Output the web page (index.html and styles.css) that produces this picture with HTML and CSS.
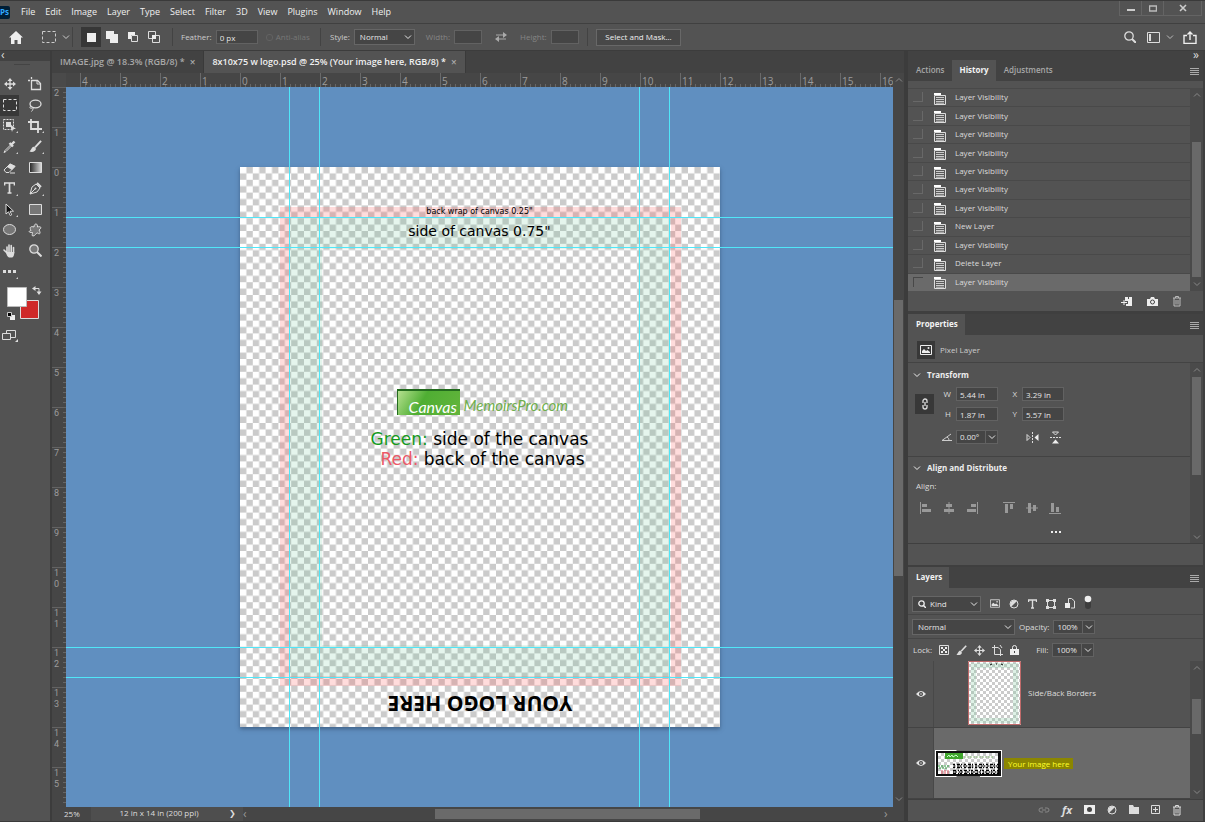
FILE: index.html
```html
<!DOCTYPE html>
<html lang="en">
<head>
<meta charset="utf-8">
<title>8x10x75 w logo.psd</title>
<link rel="stylesheet" href="styles.css">
</head>
<body>
<svg class="defs" aria-hidden="true">
  <defs>
    <symbol id="chev" viewBox="0 0 8 8"><path d="M1 2.500l3 3 3-3" fill="none" stroke="currentColor"/></symbol>
    <symbol id="chev-up" viewBox="0 0 8 8"><path d="M1 5.500l3-3 3 3" fill="none" stroke="currentColor"/></symbol>
    <symbol id="menu" viewBox="0 0 9 8"><path d="M0 1.500h9M0 3.500h9M0 5.500h9M0 7.500h9" stroke="currentColor"/></symbol>
    <symbol id="state" viewBox="0 0 12 14"><path d="M0 1h7v2H0z" fill="#fff"/><path d="M.5 3.500h11v9H.5z" fill="#5a5a5a" stroke="#ddd"/><path d="M2 5.500h8M2 7.500h8M2 9.500h8M2 11.200h8" stroke="#ccc"/></symbol>
    <symbol id="trash" viewBox="0 0 10 12"><path d="M1 3h8M3.500 3V1.500h3V3M2 3v8h6V3M4 5v4.500M6 5v4.500" fill="none" stroke="currentColor"/></symbol>
    <symbol id="eye" viewBox="0 0 10 8"><path d="M0 4Q5-2 10 4Q5 10 0 4z" fill="#e4e4e4"/><circle cx="5" cy="4" r="2" fill="#444"/><circle cx="5" cy="4" r=".8" fill="#e4e4e4"/></symbol>
    <symbol id="move" viewBox="0 0 12 12"><path d="M6 1v10M1 6h10" stroke="currentColor" stroke-width="1.300"/><path d="M6 0l2.500 3h-5zM6 12l2.500-3h-5zM0 6l3-2.500v5zM12 6L9 3.500v5z" fill="currentColor"/></symbol>
    <symbol id="brush" viewBox="0 0 14 14"><path d="M13 1L6.500 8" stroke="currentColor" stroke-width="2"/><path d="M6 7.500c-3-1-3 3-5.500 5 3 1 7 0 7-3z" fill="currentColor"/></symbol>
    <symbol id="half" viewBox="0 0 10 10"><circle cx="5" cy="5" r="4" fill="none" stroke="currentColor"/><path d="M2.200 7.800A4 4 0 0 1 7.800 2.200z" fill="currentColor"/></symbol>
    <symbol id="picture" viewBox="0 0 12 10"><path d="M.5.5h11v9H.5z" fill="none" stroke="currentColor"/><path d="M2 8V6l2-2 2 2 1.500-1L10 7v1z" fill="currentColor"/><circle cx="8.500" cy="3" r="1" fill="currentColor"/></symbol>
    <symbol id="marquee" viewBox="0 0 14 12"><path d="M.5.5h13v11H.5z" fill="none" stroke="currentColor" stroke-dasharray="3 2"/></symbol>
    <pattern id="checker" width="2" height="2" patternUnits="userSpaceOnUse"><path d="M0 0h2v2H0z" fill="#fff"/><path d="M1 0h1v1H1zM0 1h1v1H0z" fill="#cbcbcb"/></pattern>
    <linearGradient id="grad-tool"><stop offset="0" stop-color="#222"/><stop offset="1" stop-color="#ddd"/></linearGradient>
  </defs>
</svg>

<header class="menubar">
  <span class="app">Ps</span>
  <nav class="menus">
    <button>File</button><button>Edit</button><button>Image</button><button>Layer</button><button>Type</button><button>Select</button><button>Filter</button><button>3D</button><button>View</button><button>Plugins</button><button>Window</button><button>Help</button>
  </nav>
  <div class="window-controls">
    <button aria-label="Minimize"><svg width="8" height="8"><path d="M0 6h8" stroke="#ccc" stroke-width="2"/></svg></button>
    <button aria-label="Maximize"><svg width="8" height="7"><path d="M.5 1h7v5h-7z" fill="none" stroke="#bbb" stroke-width="1.500"/></svg></button>
    <button aria-label="Close" class="close"><svg width="8" height="8"><path d="M1 1l6 6M7 1L1 7" stroke="#ccc" stroke-width="1.600"/></svg></button>
  </div>
</header>

<div class="options">
  <button class="icon home" aria-label="Home"><svg width="14" height="13"><path d="M7 0l7 6.500h-2V13H8.500V9h-3v4H2V6.500H0z" fill="#eee"/></svg></button>
  <div class="opt preset"><svg width="14" height="12"><use href="#marquee"/></svg><svg width="8" height="8"><use href="#chev"/></svg></div>
  <div class="opt modes">
    <button class="icon on" aria-label="New selection"><svg width="9" height="9"><path d="M0 0h9v9H0z" fill="#eee"/></svg></button>
    <button class="icon" aria-label="Add to selection"><svg width="12" height="12"><path d="M0 0h8v3h4v9H4V8H0z" fill="#eee"/></svg></button>
    <button class="icon" aria-label="Subtract from selection"><svg width="10" height="10"><path d="M0 0h7v3H3v4H0z" fill="#eee"/><path d="M3.500 3.500h6v6h-6z" fill="none" stroke="#ddd"/></svg></button>
    <button class="icon" aria-label="Intersect with selection"><svg width="12" height="12"><path d="M.5.5h7v7h-7zM4.500 4.500h7v7h-7z" fill="none" stroke="#ddd"/><path d="M4 4h4v4H4z" fill="#eee"/></svg></button>
  </div>
  <div class="opt feather">
    <label for="feather">Feather:</label><input id="feather" class="field" value="0 px">
    <label class="anti"><input type="checkbox" disabled>Anti-alias</label>
  </div>
  <div class="opt style">
    <label for="style">Style:</label>
    <span class="drop"><select id="style"><option>Normal</option></select><svg width="8" height="8"><use href="#chev"/></svg></span>
    <label class="dim w" for="width">Width:</label><input id="width" class="field small" disabled>
    <svg class="swap" width="12" height="10"><path d="M1 3h9M2 7h9" stroke="#aaa"/><path d="M8 0l4 3-4 3zM4 4L0 7l4 3z" fill="#aaa"/></svg>
    <label class="dim" for="height">Height:</label><input id="height" class="field small" disabled>
  </div>
  <div class="opt mask"><button class="mask-button">Select and Mask...</button></div>
  <div class="right-icons">
    <button class="icon" aria-label="Search"><svg width="12" height="12"><circle cx="5" cy="5" r="4.200" fill="none" stroke="#ddd" stroke-width="1.300"/><path d="M8 8l4 4" stroke="#ddd" stroke-width="2"/></svg></button>
    <button class="icon" aria-label="Workspace"><svg width="13" height="11"><path d="M.5.5h12v10H.5z" fill="none" stroke="#ddd"/><path d="M2 2h2v7H2z" fill="#ddd"/></svg></button>
    <svg class="grey" width="8" height="8"><use href="#chev"/></svg>
    <button class="icon" aria-label="Share"><svg width="14" height="13"><path d="M4 4.500H1v8h12v-8h-3M7 9V1M4.500 3.500L7 1l2.500 2.500" fill="none" stroke="#eee" stroke-width="1.400"/></svg></button>
  </div>
</div>

<main class="workspace">
  <aside class="tools">
    <div class="collapse">‹</div>
    <div class="grip"></div>
    <div class="tool-grid">
      <button aria-label="Move"><svg width="12" height="12"><use href="#move"/></svg></button>
      <button aria-label="Artboard"><svg width="14" height="14"><path d="M3.500 0v2M0 3.500h2M3.500 3.500h6l3 3v6h-9z" fill="none" stroke="currentColor" stroke-width="1.300"/><path d="M9 3.500V7h3.500" fill="none" stroke="currentColor"/></svg></button>
      <button aria-label="Marquee" class="on"><svg width="14" height="12"><use href="#marquee"/></svg></button>
      <button aria-label="Lasso"><svg width="14" height="13"><ellipse cx="7.500" cy="5" rx="5.500" ry="3.800" fill="none" stroke="currentColor" stroke-width="1.300"/><path d="M3 7c-2 1-1 3 1 2s1 2-.5 3.500" fill="none" stroke="currentColor"/></svg></button>
      <button aria-label="Object selection" class="more"><svg width="13" height="13"><path d="M.5.5h10v10H.5z" fill="none" stroke="currentColor" stroke-dasharray="2 1"/><path d="M3 3h5v5H3z" fill="currentColor"/><path d="M7 5l6 5H10l-1 3z" fill="currentColor"/></svg></button>
      <button aria-label="Crop" class="more"><svg width="14" height="14"><path d="M3 0v10h11M0 3h10v11" fill="none" stroke="currentColor" stroke-width="1.800"/></svg></button>
      <button aria-label="Eyedropper" class="more"><svg width="13" height="13"><path d="M8 4.500L2 10.500l-1 2 2-1 6-6" fill="none" stroke="currentColor"/><path d="M6.500 3l3.500 3.500M8 5l3.500-3.500" stroke="currentColor" stroke-width="2.400"/></svg></button>
      <button aria-label="Brush" class="more"><svg width="13" height="13"><use href="#brush"/></svg></button>
      <button aria-label="Eraser"><svg width="13" height="12"><path d="M1 8l6-6 5 2.500-6 6H3z" fill="none" stroke="currentColor"/><path d="M4 5l3-3.500L12.500 4 9 8z" fill="currentColor"/><path d="M7 11h5" stroke="currentColor"/></svg></button>
      <button aria-label="Gradient"><svg width="13" height="11"><path d="M.5.5h12v10H.5z" fill="url(#grad-tool)" stroke="currentColor"/></svg></button>
      <button aria-label="Type" class="more"><svg width="11" height="12"><path d="M.5 3.500V1h10v2.500M5.500 1v10M3.500 11h4" fill="none" stroke="currentColor" stroke-width="1.700"/></svg></button>
      <button aria-label="Pen" class="more"><svg width="13" height="13"><path d="M1 12l2-7 4-3 4 4-3 4zM1 12l5-5" fill="none" stroke="currentColor"/><path d="M8 1l4 4" stroke="currentColor" stroke-width="2"/><circle cx="6.500" cy="6.500" r="1" fill="currentColor"/></svg></button>
      <button aria-label="Path selection" class="more"><svg width="9" height="13"><path d="M1 1v10l2.500-2.200 1.700 3.700 1.500-.7L5 8.200h3.500z" fill="#111" stroke="currentColor"/></svg></button>
      <button aria-label="Rectangle"><svg width="13" height="11"><path d="M.5.5h12v10H.5z" fill="#777" stroke="currentColor"/></svg></button>
      <button aria-label="Ellipse"><svg width="13" height="11"><ellipse cx="6.500" cy="5.500" rx="6" ry="5" fill="#777" stroke="currentColor"/></svg></button>
      <button aria-label="Custom shape"><svg width="14" height="14"><path d="M6 4c0-4 4-4 3.500 0 3-1 5 .5 1.500 3 2 3 1 5-1.500 3-2 0-2 3-4.500 3-2 0 0-3-.5-3.500C1 10 0 8 3 7.500 1 4 3 3 6 4z" fill="#777" stroke="currentColor"/></svg></button>
      <button aria-label="Hand"><svg width="13" height="14"><path d="M1 6l3 3M4 9V3M6 8V1M8.200 8V1.500M10.500 9V3.500" fill="none" stroke="currentColor" stroke-width="1.600" stroke-linecap="round"/><path d="M3 8h8.300c0 3-1 5.500-2.300 5.500H6C4.500 13 3 10 3 8z" fill="currentColor"/></svg></button>
      <button aria-label="Zoom"><svg width="13" height="13"><circle cx="5" cy="5" r="4.200" fill="#777" stroke="currentColor" stroke-width="1.300"/><path d="M8 8l4.500 4.500" stroke="currentColor" stroke-width="2"/></svg></button>
      <button aria-label="Edit toolbar" class="more"><svg width="13" height="3"><path d="M0 0h3v3H0zM5 0h3v3H5zM10 0h3v3h-3z" fill="currentColor"/></svg></button>
    </div>
    <svg class="swatches" width="42" height="66" aria-label="Colors">
      <path d="M20.500 16.500h18v18h-18z" fill="#cf2a2a" stroke="#ddd"/>
      <path d="M7.500 3.500h19v19h-19z" fill="#fff" stroke="#bbb"/>
      <path d="M35 4.500h4v5" fill="none" stroke="#ddd"/><path d="M32 4.500L35.500 2v5zM39 11l-2.500-3.500h5z" fill="#ddd"/>
      <path d="M10 31h5v5h-5z" fill="#eee"/><path d="M7.500 28.500h4v4h-4z" fill="#000" stroke="#ccc"/>
      <path d="M6.500 46.500h9v7h-9z" fill="#535353" stroke="#ddd"/><path d="M2.500 49.500h8v6h-8z" fill="#535353" stroke="#ddd"/><path d="M18 58v-3l-3 3z" fill="#ddd"/>
    </svg>
  </aside>

  <section class="document">
    <div class="tabs">
      <div class="tab">IMAGE.jpg @ 18.3% (RGB/8) * <button aria-label="Close tab">×</button></div>
      <div class="tab active">8x10x75 w logo.psd @ 25% (Your image here, RGB/8) * <button aria-label="Close tab">×</button></div>
    </div>
    <div class="corner"></div>
    <div class="ruler-x"><span>4</span><span>3</span><span>2</span><span>1</span><span>0</span><span>1</span><span>2</span><span>3</span><span>4</span><span>5</span><span>6</span><span>7</span><span>8</span><span>9</span><span>10</span><span>11</span><span>12</span><span>13</span><span>14</span><span>15</span><span>16</span></div>
    <div class="arrow"><svg width="8" height="8"><use href="#chev-up"/></svg></div>
    <div class="ruler-y"><span>2</span><span>1</span><span>0</span><span>1</span><span>2</span><span>3</span><span>4</span><span>5</span><span>6</span><span>7</span><span>8</span><span>9</span><span>1<br>0</span><span>1<br>1</span><span>1<br>2</span><span>1<br>3</span><span>1<br>4</span><span>1<br>5</span></div>
    <div class="viewport">
      <div class="artboard">
        <svg class="transparency" viewBox="0 0 150 175" aria-hidden="true"><path d="M0 0h75v88H0z" fill="url(#checker)" transform="scale(2)"/></svg>
        <div class="wrap-band"></div>
        <div class="side-band"></div>
        <p class="layer-text note-back">back wrap of canvas 0.25"</p>
        <p class="layer-text note-side">side of canvas 0.75"</p>
        <div class="logo"><span class="logo-box">Canvas</span><span class="logo-rest">MemoirsPro.com</span></div>
        <p class="layer-text legend green"><b>Green:</b> side of the canvas</p>
        <p class="layer-text legend red"><b>Red:</b> back of the canvas</p>
        <p class="layer-text your-logo">YOUR LOGO HERE</p>
      </div>
      <i class="guide v g1"></i><i class="guide v g2"></i><i class="guide v g3"></i><i class="guide v g4"></i>
      <i class="guide h g5"></i><i class="guide h g6"></i><i class="guide h g7"></i><i class="guide h g8"></i>
    </div>
    <div class="scroll-y"><i></i><svg width="8" height="8"><use href="#chev"/></svg></div>
    <footer class="status">
      <span class="zoom">25%</span>
      <span class="size">12 in x 14 in (200 ppi)</span>
      <span class="next">❯</span>
      <span class="scroll-x"><span>‹</span><i></i><span>›</span></span>
    </footer>
  </section>

  <aside class="panels">
    <div class="expand">»</div>
    <section class="history">
      <div class="panel-tabs"><button>Actions</button><button class="active">History</button><button>Adjustments</button><svg class="panel-menu" width="9" height="8"><use href="#menu"/></svg></div>
      <div class="history-body">
        <ul class="states">
          <li><input type="checkbox" aria-label="Source"><svg width="12" height="14"><use href="#state"/></svg>Layer Visibility</li>
          <li><input type="checkbox" aria-label="Source"><svg width="12" height="14"><use href="#state"/></svg>Layer Visibility</li>
          <li><input type="checkbox" aria-label="Source"><svg width="12" height="14"><use href="#state"/></svg>Layer Visibility</li>
          <li><input type="checkbox" aria-label="Source"><svg width="12" height="14"><use href="#state"/></svg>Layer Visibility</li>
          <li><input type="checkbox" aria-label="Source"><svg width="12" height="14"><use href="#state"/></svg>Layer Visibility</li>
          <li><input type="checkbox" aria-label="Source"><svg width="12" height="14"><use href="#state"/></svg>Layer Visibility</li>
          <li><input type="checkbox" aria-label="Source"><svg width="12" height="14"><use href="#state"/></svg>Layer Visibility</li>
          <li><input type="checkbox" aria-label="Source"><svg width="12" height="14"><use href="#state"/></svg>New Layer</li>
          <li><input type="checkbox" aria-label="Source"><svg width="12" height="14"><use href="#state"/></svg>Layer Visibility</li>
          <li><input type="checkbox" aria-label="Source"><svg width="12" height="14"><use href="#state"/></svg>Delete Layer</li>
          <li class="current"><input type="checkbox" aria-label="Source"><svg width="12" height="14"><use href="#state"/></svg>Layer Visibility</li>
        </ul>
        <div class="bar bar-history"><svg width="8" height="8"><use href="#chev-up"/></svg><i></i><svg width="8" height="8"><use href="#chev"/></svg></div>
      </div>
      <div class="history-actions">
        <button class="icon" aria-label="New document from state"><svg width="12" height="11"><path d="M4 1h3v2h1V1h3v9H5V8h2V5H4z" fill="#eee"/><path d="M0 6.500h6M3 4v5" stroke="#eee"/></svg></button>
        <button class="icon" aria-label="Snapshot"><svg width="11" height="9"><path d="M0 2h3l1-2h3l1 2h3v7H0z" fill="#eee"/><circle cx="5.500" cy="5" r="2" fill="none" stroke="#444"/></svg></button>
        <button class="icon grey" aria-label="Delete state"><svg width="10" height="12"><use href="#trash"/></svg></button>
      </div>
    </section>

    <section class="properties">
      <div class="panel-tabs"><button class="active">Properties</button><svg class="panel-menu" width="9" height="8"><use href="#menu"/></svg></div>
      <div class="kind-row"><span class="chip"><svg width="12" height="10"><use href="#picture"/></svg></span>Pixel Layer</div>
      <div class="props-body">
        <div class="props-main">
          <div class="transform">
            <h2><svg width="8" height="8"><use href="#chev"/></svg>Transform</h2>
            <div class="transform-grid">
              <button class="chip link" aria-label="Link width and height"><svg width="8" height="12"><path d="M2 5V3a2 2 0 0 1 4 0v2M2 7v2a2 2 0 0 0 4 0V7M4 4v4" fill="none" stroke="#ddd" stroke-width="1.300"/></svg></button>
              <label for="tw">W</label><input class="field" id="tw" value="5.44 in"><label for="tx">X</label><input class="field" id="tx" value="3.29 in">
              <label for="th">H</label><input class="field" id="th" value="1.87 in"><label for="ty">Y</label><input class="field" id="ty" value="5.57 in">
            </div>
            <div class="angle-row">
              <svg width="11" height="8"><path d="M10 1L1 7.500h10M6 4q2 1 2 3" fill="none" stroke="#ccc"/></svg>
              <span class="combo"><input aria-label="Angle" value="0.00°"><button aria-label="Angle presets"><svg width="8" height="8"><use href="#chev"/></svg></button></span>
              <button class="icon flip" aria-label="Flip horizontal"><svg width="13" height="11"><path d="M1 2.500v6l3-3z" fill="none" stroke="#ddd"/><path d="M12.500 2v7L8.500 5.500z" fill="#eee"/><path d="M6.500 0v11" stroke="#ddd" stroke-dasharray="2 1"/></svg></button>
              <button class="icon" aria-label="Flip vertical"><svg width="11" height="13"><path d="M2.500 1h6l-3 3z" fill="none" stroke="#ddd"/><path d="M2 12.500h7L5.500 8.500z" fill="#eee"/><path d="M0 6.500h11" stroke="#ddd" stroke-dasharray="2 1"/></svg></button>
            </div>
          </div>
          <div class="align">
            <h2><svg width="8" height="8"><use href="#chev"/></svg>Align and Distribute</h2>
            <p>Align:</p>
            <div class="align-row">
              <button class="icon" aria-label="Align left"><svg width="12" height="12"><path d="M.5 0v12" stroke="#999"/><path d="M2 2h5v3H2zM2 7h9v3H2z" fill="#999"/></svg></button>
              <button class="icon" aria-label="Align center"><svg width="12" height="12"><path d="M6 0v12" stroke="#999"/><path d="M3 2h6v3H3zM1 7h10v3H1z" fill="#999"/></svg></button>
              <button class="icon" aria-label="Align right"><svg width="12" height="12"><path d="M11.500 0v12" stroke="#999"/><path d="M5 2h5v3H5zM1 7h9v3H1z" fill="#999"/></svg></button>
              <button class="icon vertical" aria-label="Align top"><svg width="12" height="12"><path d="M0 .5h12" stroke="#999"/><path d="M2 2h3v9H2zM7 2h3v5H7z" fill="#999"/></svg></button>
              <button class="icon" aria-label="Align middle"><svg width="12" height="12"><path d="M0 6h12" stroke="#999"/><path d="M2 1h3v10H2zM7 3h3v6H7z" fill="#999"/></svg></button>
              <button class="icon" aria-label="Align bottom"><svg width="12" height="12"><path d="M0 11.500h12" stroke="#999"/><path d="M2 1h3v9H2zM7 5h3v5H7z" fill="#999"/></svg></button>
            </div>
            <button class="icon dots" aria-label="More options"><svg width="11" height="3"><path d="M0 0h2v2H0zM4 0h2v2H4zM8 0h2v2H8z" fill="#eee"/></svg></button>
          </div>
        </div>
        <div class="bar bar-props"><svg width="8" height="8"><use href="#chev-up"/></svg><i></i><svg width="8" height="8"><use href="#chev"/></svg></div>
      </div>
    </section>

    <section class="layers">
      <div class="panel-tabs"><button class="active">Layers</button><svg class="panel-menu" width="9" height="8"><use href="#menu"/></svg></div>
      <div class="filter-row">
        <span class="drop kind"><select aria-label="Filter kind"><option>Kind</option></select><svg class="lens" width="8" height="8"><circle cx="3.500" cy="3.500" r="2.700" fill="none" stroke="#eee" stroke-width="1.300"/><path d="M5.500 5.500L8 8" stroke="#eee" stroke-width="1.500"/></svg><svg width="8" height="8"><use href="#chev"/></svg></span>
        <svg width="10" height="9"><use href="#picture"/></svg>
        <svg width="10" height="10"><use href="#half"/></svg>
        <svg width="9" height="10"><path d="M.5 3V1h8v2M4.500 1v8M3 9h3" fill="none" stroke="#ddd" stroke-width="1.400"/></svg>
        <svg width="10" height="10"><path d="M1.500 1.500h7v7h-7z" fill="none" stroke="#ddd"/><path d="M0 0h3v3H0zM7 0h3v3H7zM0 7h3v3H0zM7 7h3v3H7z" fill="#ddd"/></svg>
        <svg width="10" height="11"><path d="M3.500 5V.5h3L9.500 3v7H6" fill="none" stroke="#ddd"/><path d="M0 5h5v5H0z" fill="#eee"/></svg>
        <svg width="8" height="18"><rect x="1" y="1" width="6" height="13" rx="3" fill="#3c3c3c"/><circle cx="4" cy="4" r="3.300" fill="#eee"/></svg>
      </div>
      <div class="blend-row">
        <span class="drop blend"><select aria-label="Blend mode"><option>Normal</option></select><svg width="8" height="8"><use href="#chev"/></svg></span>
        <label for="opacity">Opacity:</label>
        <span class="combo"><input id="opacity" value="100%"><button aria-label="Opacity slider"><svg width="8" height="8"><use href="#chev"/></svg></button></span>
      </div>
      <div class="lock-row">
        <span>Lock:</span>
        <svg width="10" height="10"><path d="M.5.5h9v9h-9z" fill="none" stroke="#ddd"/><path d="M2 2h2v2H2zM6 2h2v2H6zM4 4h2v2H4zM2 6h2v2H2zM6 6h2v2H6z" fill="#eee"/></svg>
        <svg width="11" height="11" viewBox="0 0 14 14"><use href="#brush" width="14" height="14"/></svg>
        <svg width="11" height="11"><use href="#move"/></svg>
        <svg width="11" height="11"><path d="M2.500 0v9.500H11M0 2.500h6l2.500 2V11M8 0l2 3" fill="none" stroke="#ddd"/></svg>
        <svg width="9" height="10"><path d="M0 4h9v6H0z" fill="#eee"/><path d="M2.500 4V2.500a2 2 0 0 1 4 0V4" fill="none" stroke="#eee"/><path d="M4 6h1v2H4z" fill="#444"/></svg>
        <label for="fill">Fill:</label>
        <span class="combo"><input id="fill" value="100%"><button aria-label="Fill slider"><svg width="8" height="8"><use href="#chev"/></svg></button></span>
      </div>
      <div class="layer-body">
        <ul class="layer-list">
          <li class="borders">
            <button class="icon eye" aria-label="Toggle visibility"><svg width="10" height="8"><use href="#eye"/></svg></button>
            <div class="layer-main"><svg class="thumb" width="53" height="64"><path d="M0 0h18v22H0z" fill="url(#checker)" transform="scale(3)"/><path d="M5.500 4.500h42v55h-42z" fill="none" stroke="#7cc79c" stroke-opacity=".25" stroke-width="5"/><path d="M.5.5h52v63H.5z" fill="none" stroke="#c06a6a"/><path d="M22 4l2-1M28 3h1M33 3l2 1" stroke="#000"/></svg>Side/Back Borders</div>
          </li>
          <li class="on">
            <button class="icon eye" aria-label="Toggle visibility"><svg width="10" height="8"><use href="#eye"/></svg></button>
            <div class="layer-main"><svg class="thumb" width="67" height="27"><path d="M1 1h65v25H1z" fill="#111"/><path d="M1 1h20v7H1z" fill="url(#checker)" transform="scale(3)"/><path d="M10 3h18v6H10z" fill="#3fa52c"/><path d="M12 7l2-2 1 2 2-2 1 2 3-2 2 2" fill="none" stroke="#cfc"/><path d="M29 7h29" stroke="#8fbf7d" stroke-dasharray="2 1"/><path d="M3 16h11M4 18h9" stroke="#2b9c3d" stroke-dasharray="2 1"/><path d="M18 14.500h46M18 17.500h46" stroke="#000" stroke-width="1.300" stroke-dasharray="2 2 3 1 1 2"/><path d="M19 16h45" stroke="#000" stroke-dasharray="1 2 2 1"/><path d="M6 21h8M6 23h9" stroke="#dd5560" stroke-dasharray="2 1"/><path d="M18 20.500h46M18 23.500h46" stroke="#000" stroke-width="1.300" stroke-dasharray="3 2 1 1 2 2"/><path d="M18 22h46" stroke="#000" stroke-dasharray="1 1 2 2"/><path d="M.5.5h21M45 .5h21M.5 26.500h21M45 26.500h21M.5 0v27M66.500 0v27" stroke="#fff"/></svg><mark>Your image here</mark></div>
          </li>
        </ul>
        <div class="bar bar-layers"><svg width="8" height="8"><use href="#chev-up"/></svg><i></i><svg width="8" height="8"><use href="#chev"/></svg></div>
      </div>
      <div class="layer-actions">
        <button class="icon" aria-label="Link layers"><svg width="12" height="6"><path d="M5 1H3a2 2 0 0 0 0 4h2M7 1h2a2 2 0 0 1 0 4H7M4 3h4" fill="none" stroke="#888"/></svg></button>
        <button class="icon fx" aria-label="Layer style">fx</button>
        <button class="icon" aria-label="Add mask"><svg width="11" height="9"><path d="M0 0h11v9H0z" fill="#eee"/><circle cx="5.500" cy="4.500" r="2.500" fill="#444"/></svg></button>
        <button class="icon" aria-label="Adjustment layer"><svg width="10" height="10"><use href="#half"/></svg></button>
        <button class="icon" aria-label="New group"><svg width="10" height="9"><path d="M0 0h4l1 2h5v7H0z" fill="#ddd"/></svg></button>
        <button class="icon" aria-label="New layer"><svg width="9" height="9"><path d="M.5.5h8v8h-8zM4.500 2v5M2 4.500h5" fill="none" stroke="#ddd"/></svg></button>
        <button class="icon" aria-label="Delete layer"><svg width="10" height="12"><use href="#trash"/></svg></button>
      </div>
    </section>
  </aside>
</main>
</body>
</html>
```

FILE: styles.css
```css
* { box-sizing: border-box; }
body {
  margin: 0; height: 100vh; overflow: hidden;
  display: flex; flex-direction: column;
  background: #535353; color: #dcdcdc;
  font: 8px/12px "Open Sans", "Noto Sans", sans-serif;
  border-bottom: 1px solid #3a3a3a;
}
button, input, select { font: inherit; color: inherit; margin: 0; padding: 0; border: 0; background: none; border-radius: 0; outline: 0; }
svg { display: block; flex: none; }
ul { list-style: none; margin: 0; padding: 0; }
p, h2 { margin: 0; }
.defs { position: absolute; width: 0; height: 0; }
.icon { display: flex; align-items: center; justify-content: center; flex: none; }
.grey { color: #bbb; }

.menubar { flex: none; height: 24px; display: flex; border-top: 1px solid #3a3a3a; border-bottom: 1px solid #404040; font-size: 9px; }
.app { align-self: center; width: 10px; height: 13px; overflow: hidden; background: #001e36; color: #31a8ff; font-size: 8px; font-weight: 700; border-radius: 0 2px 2px 0; }
.menus { flex: 1; display: flex; gap: 10px; padding-left: 11px; color: #f0f0f0; }
.window-controls { display: flex; height: 15px; margin-right: 3px; border: 1px solid #646464; border-top: 0; }
.window-controls button { width: 22px; display: grid; place-items: center; border-right: 1px solid #646464; }
.window-controls .close { width: 37px; border: 0; }

.options { flex: none; height: 27px; display: grid; grid-template-columns: 31px 41px 100px 148px 267px 1fr auto; align-items: center; border-bottom: 1px solid #3c3c3c; color: #ccc; }
.options > .opt { height: 18px; display: flex; align-items: center; }
.options > .opt + .opt { border-left: 1px solid #434343; }
.options > .opt.modes { height: 20px; padding-left: 8px; gap: 1px; }
.preset { padding-left: 11px; gap: 6px; }
.modes .icon { width: 20px; height: 20px; }
.modes .on { background: #373737; }
.field { width: 42px; height: 14px; padding: 0 3px; background: #454545; border: 1px solid #626262; color: #e6e6e6; }
.small { width: 28px; }
.feather { padding-left: 8px; gap: 4px; }
.anti { display: flex; align-items: center; gap: 3px; margin-left: 4px; color: #777; }
.anti input { appearance: none; width: 7px; height: 7px; border: 1px solid #626262; border-radius: 3px; }
.style { padding-left: 9px; gap: 4px; }
.dim { color: #858585; }
.w { margin-left: 7px; }
.swap { margin: 0 9px 0 9px; }
.drop { display: grid; width: 61px; height: 16px; background: #454545; border: 1px solid #666; color: #e6e6e6; align-items: center; }
.drop > * { grid-area: 1 / 1; }
.drop > svg { justify-self: end; margin-right: 2px; pointer-events: none; }
.drop select { appearance: none; width: 100%; padding-left: 5px; }
.mask { padding-left: 8px; }
.mask-button { width: 85px; height: 17px; background: #484848; border: 1px solid #686868; color: #eee; }
.right-icons { display: flex; align-items: center; gap: 9px; padding-right: 8px; }
.right-icons .icon:first-child { margin-right: 2px; }
.right-icons .grey { margin-left: -3px; }

.workspace { flex: 1; min-height: 0; display: grid; grid-template-columns: 50px minmax(0, 1fr) 297px; }
.tools { display: flex; flex-direction: column; background: #535353; }
.collapse { height: 10px; line-height: 8px; padding-left: 1px; background: #424242; font-size: 12px; }
.grip { width: 16px; height: 1px; margin: 3px 0 9px 14px; background: #444; }
.tool-grid { flex: none; height: 208px; display: grid; grid-template: repeat(10, 1fr) / 19px 32px; }
.tool-grid button { position: relative; display: grid; place-items: center; color: #ddd; }
.tool-grid .on { background: #383838; }
.tool-grid .more::after { content: ""; position: absolute; right: 1px; bottom: 3px; border: 1px solid #ccc; border-left-color: transparent; border-top-color: transparent; }
.tool-grid .more:nth-child(even)::after { right: 7px; }
.swatches { margin-top: 2px; }

.document { display: grid; grid-template: 22px 14px minmax(0, 1fr) 14px / 14px minmax(0, 1fr) 11px; border-left: 2px solid #3c3c3c; border-right: 4px solid #3c3c3c; background: #464646; }
.tabs { grid-column: 1 / -1; display: flex; background: #424242; font-weight: 600; font-size: 9px; color: #a8a8a8; }
.tab { display: flex; align-items: center; gap: 5px; padding: 0 8px; border-right: 1px solid #3a3a3a; white-space: nowrap; }
.tab.active { background: #535353; color: #f0f0f0; }
.tab button { color: #aaa; font-size: 10px; }
.corner { background: #4a4a4a; }
.ruler-x { display: flex; overflow: hidden; padding-left: 14px; color: #9c9c9c; font: 10px/16px "Open Sans", sans-serif; }
.ruler-x span { flex: none; width: 40px; padding-left: 1px; border-left: 1px solid #6a6a6a; background: repeating-linear-gradient(90deg, transparent 0 4px, #666 4px 5px) bottom / 100% 3px no-repeat; }
.ruler-y { overflow: hidden; color: #9c9c9c; font: 9px/11px Roboto, sans-serif; }
.ruler-y span { display: block; height: 40px; padding: 0 0 0 2px; border-top: 1px solid #626262; background: repeating-linear-gradient(transparent 0 4px, #666 4px 5px) right / 3px 100% no-repeat; }
.arrow { display: grid; place-items: center; color: #888; }
.viewport { position: relative; display: flex; align-items: center; justify-content: center; overflow: hidden; background: #608fc0; }
.artboard { position: relative; flex: none; width: 480px; height: 560px; box-shadow: 0 2px 4px #2b456299; color: #000; }
.transparency { width: 100%; height: 100%; }
.wrap-band, .side-band { position: absolute; }
.wrap-band { inset: 40px 39px 41px 40px; border: 10px solid #ff606038; }
.side-band { inset: 50px 50px; border: 32px solid #5cc08c29; }
.layer-text { position: absolute; left: 0; right: 0; text-align: center; font-family: "DejaVu Sans", sans-serif; white-space: nowrap; }
.note-back { top: 39px; font-size: 8px; line-height: 12px; }
.note-side { top: 55px; font-size: 14px; line-height: 18px; }
.legend { font-size: 17px; line-height: 20px; }
.legend b { font-weight: 400; }
.green { top: 262px; }
.green b { color: #159a1d; }
.red { top: 282px; left: 6px; }
.red b { color: #ec5a68; }
.your-logo { top: 524px; left: 0; font: 700 21px/26px "Open Sans", sans-serif; transform: rotate(180deg); }
.logo { position: absolute; top: 222px; left: 157px; display: flex; align-items: end; font: italic 15px/20px Lato, sans-serif; color: #6fae4b; }
.logo-box { width: 63px; height: 26px; padding: 7px 0 0 11px; border: solid #236b1e; border-width: 2px 0 0 1px; background: linear-gradient(120deg, #b5e08f, #4fae33 40%, #63b53c); color: #fff; font-size: 16px; line-height: 18px; }
.logo-rest { padding-left: 4px; }
.guide { position: absolute; background: #50e6f8; }
.v { top: 0; bottom: 0; width: 1px; }
.h { left: 0; right: 0; height: 1px; }
.g1 { left: calc(50% - 191px); }
.g2 { left: calc(50% - 161px); }
.g3 { left: calc(50% + 159px); }
.g4 { left: calc(50% + 189px); }
.g5 { top: calc(50% - 230px); }
.g6 { top: calc(50% - 200px); }
.g7 { top: calc(50% + 200px); }
.g8 { top: calc(50% + 230px); }
.scroll-y { display: grid; grid-template-rows: 214fr 277fr 220fr 12px; justify-items: center; color: #888; }
.scroll-y i { grid-row: 2; width: 9px; background: #6a6a6a; }
.scroll-y svg { grid-row: 4; }
.status { grid-column: 1 / -1; display: grid; grid-template-columns: 39px 130px 22px 1fr; align-items: center; background: #464646; color: #ddd; }
.zoom { padding-left: 12px; }
.size { background: #4e4e4e; height: 100%; text-align: center; padding-left: 6px; }
.next { background: #4e4e4e; height: 100%; padding-left: 8px; }
.scroll-x { display: grid; grid-template-columns: 8px 183fr 263fr 183fr 20px; align-items: center; color: #999; font-size: 12px; }
.scroll-x i { grid-column: 3; height: 10px; background: #6a6a6a; }
.scroll-x span:last-child { grid-column: 5; }

.panels { display: flex; flex-direction: column; min-height: 0; border-right: 2px solid #3f3f3f; }
.expand { flex: none; height: 9px; line-height: 7px; padding-right: 4px; text-align: right; background: #424242; font-size: 12px; }
.panel-tabs { flex: none; height: 21px; display: flex; align-items: stretch; background: #424242; }
.panel-tabs button { padding: 0 7px 1px 8px; color: #a8a8a8; font-weight: 600; }
.panel-tabs .active { background: #535353; color: #f4f4f4; font-weight: 700; }
.panel-menu { margin: auto 4px auto auto; color: #aaa; }
.history { flex: none; border-bottom: 3px solid #3f3f3f; }
.history-body { display: grid; grid-template-columns: 1fr 13px; padding-top: 7px; }
.states { height: 203px; display: grid; grid-template-rows: repeat(11, minmax(0, 1fr)); }
.states li { display: flex; align-items: center; border-top: 1px solid #494949; padding: 0 0 1px 5px; }
.states svg { margin: 3px 9px 0 11px; }
.states input { appearance: none; width: 10px; height: 10px; border: solid #686868; border-width: 0 1px 1px 0; }
.states .current { background: #6a6a6a; }
.states .current input { border-color: #484848; border-width: 1px 0 0 1px; }
.bar { display: grid; justify-items: center; align-items: center; background: #4a4a4a; color: #888; }
.bar i { width: 9px; height: 100%; background: #696969; }
.bar-history { grid-template-rows: 14px 40fr 135fr 14px; }
.bar-history i { grid-row: 3; }
.bar-history svg:last-child { grid-row: 4; }
.history-actions { height: 20px; display: flex; align-items: center; justify-content: end; gap: 14px; padding-right: 21px; }
.properties { flex: none; border-bottom: 1px solid #3f3f3f; }
.kind-row { height: 28px; display: flex; align-items: center; gap: 5px; padding: 3px 0 0 9px; border-bottom: 1px solid #434343; color: #ccc; }
.chip { width: 18px; height: 18px; display: grid; place-items: center; background: #383838; color: #eee; }
.props-body { display: grid; grid-template-columns: 1fr 13px; }
.transform { height: 94px; padding: 6px 0 0 5px; border-bottom: 1px solid #434343; }
h2 { display: flex; gap: 6px; font-size: 8px; line-height: 12px; color: #eee; align-items: center; }
.transform-grid { display: grid; grid-template-columns: 20px 22px 42px 24px 42px; grid-auto-rows: 14px; row-gap: 6px; margin: 6px 0 0 1px; align-items: center; }
.transform-grid label { text-align: right; padding-right: 5px; }
.transform-grid .link { grid-row: span 2; width: 19px; height: 20px; margin-left: 1px; }
.angle-row { display: flex; align-items: center; margin: 9px 0 0 28px; }
.angle-row .combo { margin-left: 4px; }
.flip { margin: 0 11px 0 28px; }
.combo { display: flex; width: 42px; height: 14px; background: #454545; border: 1px solid #626262; color: #e6e6e6; }
.combo input { width: 28px; padding-left: 3px; }
.combo button { flex: 1; display: grid; place-items: center; border-left: 1px solid #626262; }
.align { height: 86px; padding: 5px 0 0 5px; }
.align p { margin: 6px 0 0 3px; }
.align-row { display: flex; gap: 11px; padding: 10px 0 0 7px; }
.vertical { margin-left: 14px; }
.dots { margin: 17px 0 0 138px; }
.bar-props { grid-template-rows: 14px 98fr 55fr 13px; }
.bar-props svg:last-child { grid-row: 4; }
.layers { flex: 1; min-height: 0; display: flex; flex-direction: column; margin-top: 21px; border-top: 2px solid #3f3f3f; }
.filter-row, .blend-row, .lock-row { flex: none; display: flex; align-items: center; padding-left: 4px; }
.filter-row { height: 27px; gap: 9px; padding-top: 5px; border-bottom: 1px solid #464646; color: #ddd; }
.kind { width: 69px; }
.drop.kind select { padding-left: 17px; }
.drop .lens { justify-self: start; margin-left: 5px; }
.blend-row { height: 24px; gap: 4px; border-bottom: 1px solid #464646; }
.blend { width: 103px; }
.lock-row { height: 22px; gap: 7px; padding-left: 5px; color: #ddd; }
.lock-row label { margin-left: 10px; }
.lock-row .combo { margin-left: -3px; }
.layer-body { flex: 1; min-height: 0; display: grid; grid-template-columns: 1fr 13px; }
.layer-list { display: grid; grid-template-rows: minmax(0, 67fr) minmax(0, 71fr); min-height: 0; }
.layer-list li { display: grid; grid-template-columns: 25px 1fr; border-bottom: 1px solid #434343; }
.layer-main { display: flex; align-items: center; border-left: 1px solid #484848; gap: 7px; }
.borders .layer-main { padding: 0 0 2px 34px; }
.on .layer-main { background: #6a6a6a; padding-left: 1px; gap: 2px; }
mark { padding: 0 4px; background: #8b8600; color: #ffff2e; line-height: 11px; }
.bar-layers { grid-template-rows: 14px 24fr 36fr 52fr 14px; }
.bar-layers i { grid-row: 3; }
.bar-layers svg:last-child { grid-row: 5; }
.layer-actions { flex: none; height: 22px; display: flex; align-items: center; justify-content: end; gap: 12px; padding: 0 21px 2px 0; border-top: 1px solid #3f3f3f; color: #ddd; }
.fx { font: italic 700 11px/12px "Open Sans", sans-serif; }
```
